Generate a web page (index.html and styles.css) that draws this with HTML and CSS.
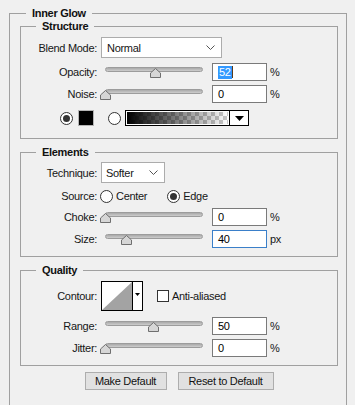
FILE: index.html
```html
<!DOCTYPE html>
<html lang="en">
<head>
    <meta charset="UTF-8">
    <title>Inner Glow</title>
    <link rel="stylesheet" href="styles.css">
</head>
<body>

<section class="panel">
    <div class="title panel-title">Inner Glow</div>

    <div class="group structure">
        <div class="title">Structure</div>

        <div class="row row-select">
            <span class="label">Blend Mode:</span>
            <div class="select select-wide">
                <span>Normal</span>
                <svg class="chevron" width="9" height="5" viewBox="0 0 9 5"><polyline points="0.5,0.5 4.5,4.5 8.5,0.5" fill="none" stroke="#555" stroke-width="1"/></svg>
            </div>
        </div>

        <div class="row row-slider first">
            <span class="label">Opacity:</span>
            <div class="slider">
                <div class="track"></div>
                <svg class="thumb" style="left: 49px" width="11" height="10" viewBox="0 0 11 10"><polygon points="0.5,9.5 0.5,5 5.5,0.5 10.5,5 10.5,9.5" fill="#d6d6d6" stroke="#6f6f6f"/></svg>
            </div>
            <div class="field"><span class="selected">52</span><span class="caret"></span></div>
            <span class="unit">%</span>
        </div>

        <div class="row row-slider">
            <span class="label">Noise:</span>
            <div class="slider">
                <div class="track"></div>
                <svg class="thumb" style="left: -1px" width="11" height="10" viewBox="0 0 11 10"><polygon points="0.5,9.5 0.5,5 5.5,0.5 10.5,5 10.5,9.5" fill="#d6d6d6" stroke="#6f6f6f"/></svg>
            </div>
            <div class="field">0</div>
            <span class="unit">%</span>
        </div>

        <div class="row row-colors">
            <span class="radio checked"></span>
            <span class="swatch"></span>
            <span class="radio"></span>
            <div class="gradient">
                <div class="gradient-fill"></div>
                <div class="gradient-drop">
                    <svg width="9" height="5" viewBox="0 0 9 5"><polygon points="0,0 9,0 4.5,5" fill="#000"/></svg>
                </div>
            </div>
        </div>
    </div>

    <div class="group elements">
        <div class="title">Elements</div>

        <div class="row row-select">
            <span class="label">Technique:</span>
            <div class="select select-short">
                <span>Softer</span>
                <svg class="chevron" width="9" height="5" viewBox="0 0 9 5"><polyline points="0.5,0.5 4.5,4.5 8.5,0.5" fill="none" stroke="#555" stroke-width="1"/></svg>
            </div>
        </div>

        <div class="row row-source">
            <span class="label">Source:</span>
            <span class="radio"></span>
            <span class="option option-center">Center</span>
            <span class="radio checked"></span>
            <span class="option">Edge</span>
        </div>

        <div class="row row-slider">
            <span class="label">Choke:</span>
            <div class="slider">
                <div class="track"></div>
                <svg class="thumb" style="left: -1px" width="11" height="10" viewBox="0 0 11 10"><polygon points="0.5,9.5 0.5,5 5.5,0.5 10.5,5 10.5,9.5" fill="#d6d6d6" stroke="#6f6f6f"/></svg>
            </div>
            <div class="field">0</div>
            <span class="unit">%</span>
        </div>

        <div class="row row-slider">
            <span class="label">Size:</span>
            <div class="slider">
                <div class="track"></div>
                <svg class="thumb" style="left: 20px" width="11" height="10" viewBox="0 0 11 10"><polygon points="0.5,9.5 0.5,5 5.5,0.5 10.5,5 10.5,9.5" fill="#d6d6d6" stroke="#6f6f6f"/></svg>
            </div>
            <div class="field focused">40</div>
            <span class="unit">px</span>
        </div>
    </div>

    <div class="group quality">
        <div class="title">Quality</div>

        <div class="row row-contour">
            <span class="label">Contour:</span>
            <div class="contour">
                <svg class="curve" width="30" height="28" viewBox="0 0 30 28"><polygon points="0,28 30,0 30,28" fill="#a3a3a3"/></svg>
                <div class="contour-drop">
                    <svg width="5" height="3" viewBox="0 0 5 3"><polygon points="0,0 5,0 2.5,3" fill="#000"/></svg>
                </div>
            </div>
            <span class="checkbox"></span>
            <span class="option">Anti-aliased</span>
        </div>

        <div class="row row-slider first">
            <span class="label">Range:</span>
            <div class="slider">
                <div class="track"></div>
                <svg class="thumb" style="left: 47px" width="11" height="10" viewBox="0 0 11 10"><polygon points="0.5,9.5 0.5,5 5.5,0.5 10.5,5 10.5,9.5" fill="#d6d6d6" stroke="#6f6f6f"/></svg>
            </div>
            <div class="field">50</div>
            <span class="unit">%</span>
        </div>

        <div class="row row-slider">
            <span class="label">Jitter:</span>
            <div class="slider">
                <div class="track"></div>
                <svg class="thumb" style="left: -1px" width="11" height="10" viewBox="0 0 11 10"><polygon points="0.5,9.5 0.5,5 5.5,0.5 10.5,5 10.5,9.5" fill="#d6d6d6" stroke="#6f6f6f"/></svg>
            </div>
            <div class="field">0</div>
            <span class="unit">%</span>
        </div>
    </div>

    <div class="buttons">
        <button class="btn btn-make">Make Default</button>
        <button class="btn btn-reset">Reset to Default</button>
    </div>
</section>

</body>
</html>
```

FILE: styles.css
```css
body {
    margin: 0;
    padding: 13px 8px 0 9px;
    background: #f0f0f0;
    font-family: "Liberation Sans", Arial, sans-serif;
    font-size: 11px;
    letter-spacing: -0.3px;
    color: #161616;
    overflow: hidden;
}

/* group boxes with a caption sitting on the top border */
.panel {
    padding: 0 8px 40px 10px;
    border: 1px solid #a0a0a0;
}

.group {
    border: 1px solid #a0a0a0;
    margin-top: 13px;
}

.structure {
    margin-top: 6px;
    padding-bottom: 12px;
}

.elements {
    padding-bottom: 8px;
}

.quality {
    padding-bottom: 8px;
}

.title {
    width: fit-content;
    margin: -7px 0 0 15px;
    padding: 0 6px;
    line-height: 13px;
    font-weight: bold;
    color: #111;
    background: #f0f0f0;
}

.panel-title {
    margin-left: 6px;
}

.row {
    display: flex;
    align-items: center;
}

.label {
    width: 76px;
    text-align: right;
    margin-right: 4px;
    white-space: nowrap;
}

/* dropdowns */
.row-select {
    margin-top: 4px;
}

.elements .row-select {
    margin-top: 3px;
}

.select {
    display: flex;
    align-items: center;
    justify-content: space-between;
    box-sizing: border-box;
    height: 21px;
    padding: 0 6px 0 5px;
    background: #fff;
    border: 1px solid #acacac;
}

.select-wide {
    width: 121px;
}

.select-short {
    width: 64px;
    padding-left: 4px;
}

/* slider rows */
.row-slider {
    margin-top: 4px;
    height: 18px;
}

.structure .row-slider.first {
    margin-top: 5px;
}

.quality .row-slider.first {
    margin-top: 6px;
}

.slider {
    position: relative;
    width: 106px;
    height: 18px;
}

.track {
    box-sizing: border-box;
    margin: 4px 4px 0;
    height: 5px;
    border: 1px solid #9c9c9c;
    border-radius: 3px;
    background: linear-gradient(#a9a9a9, #cdcdcd);
}

.thumb {
    position: absolute;
    top: 5px;
}

.field {
    box-sizing: border-box;
    width: 55px;
    height: 18px;
    margin-left: 5px;
    padding: 2px 5px 0;
    line-height: 13px;
    background: #fff;
    border: 1px solid #7a7a7a;
    color: #000;
}

.field.focused {
    border-color: #3a7fc9;
}

.selected {
    display: inline-block;
    padding: 0 1px;
    background: #3399ff;
    color: #fff;
}

.caret {
    display: inline-block;
    width: 1px;
    height: 12px;
    vertical-align: top;
    background: #5c3a1a;
}

.unit {
    margin-left: 3px;
}

/* colour row */
.row-colors {
    margin-top: 7px;
    height: 16px;
    padding-left: 39px;
}

.radio {
    box-sizing: border-box;
    width: 13px;
    height: 13px;
    border: 1px solid #333;
    border-radius: 50%;
    background: #fff;
    display: flex;
    align-items: center;
    justify-content: center;
}

.radio.checked::after {
    content: "";
    width: 7px;
    height: 7px;
    border-radius: 50%;
    background: #333;
}

.swatch {
    box-sizing: border-box;
    width: 16px;
    height: 16px;
    margin: 0 14px 0 5px;
    border: 1px solid #b4b4b4;
    background: #000;
}

.gradient {
    display: flex;
    box-sizing: border-box;
    width: 124px;
    height: 16px;
    margin-left: 4px;
    border: 1px solid #000;
}

.gradient-fill {
    flex: 1;
    border: 1px solid #fff;
    background:
        linear-gradient(to right, #000, rgba(0, 0, 0, 0)),
        repeating-conic-gradient(#c8c8c8 0 25%, #fff 0 50%) 0 0 / 8px 8px;
}

.gradient-drop {
    width: 18px;
    border-left: 1px solid #000;
    background: #fff;
    display: flex;
    align-items: center;
    justify-content: center;
}

/* source row */
.row-source {
    margin-top: 5px;
    height: 16px;
}

.row-source .label {
    margin-right: 3px;
}

.option {
    margin-left: 3px;
}

.option-center {
    margin-right: 20px;
}

/* contour row */
.row-contour {
    margin-top: 4px;
    height: 30px;
}

.contour {
    display: flex;
    box-sizing: border-box;
    width: 42px;
    height: 30px;
    border: 1px solid #000;
    background: #fff;
}

.curve {
    display: block;
}

.contour-drop {
    flex: 1;
    border-left: 1px solid #000;
    display: flex;
    justify-content: center;
    padding-top: 11px;
}

.contour-drop svg {
    display: block;
}

.checkbox {
    box-sizing: border-box;
    width: 12px;
    height: 12px;
    margin-left: 14px;
    border: 1px solid #333;
    background: #fff;
}

/* buttons */
.buttons {
    display: flex;
    justify-content: center;
    gap: 11px;
    margin-top: 6px;
}

.btn {
    height: 18px;
    padding: 0;
    font-family: inherit;
    font-size: 11px;
    letter-spacing: -0.3px;
    color: #111;
    background: #e1e1e1;
    border: 1px solid #adadad;
}

.btn-make {
    width: 82px;
}

.btn-reset {
    width: 96px;
}
```
